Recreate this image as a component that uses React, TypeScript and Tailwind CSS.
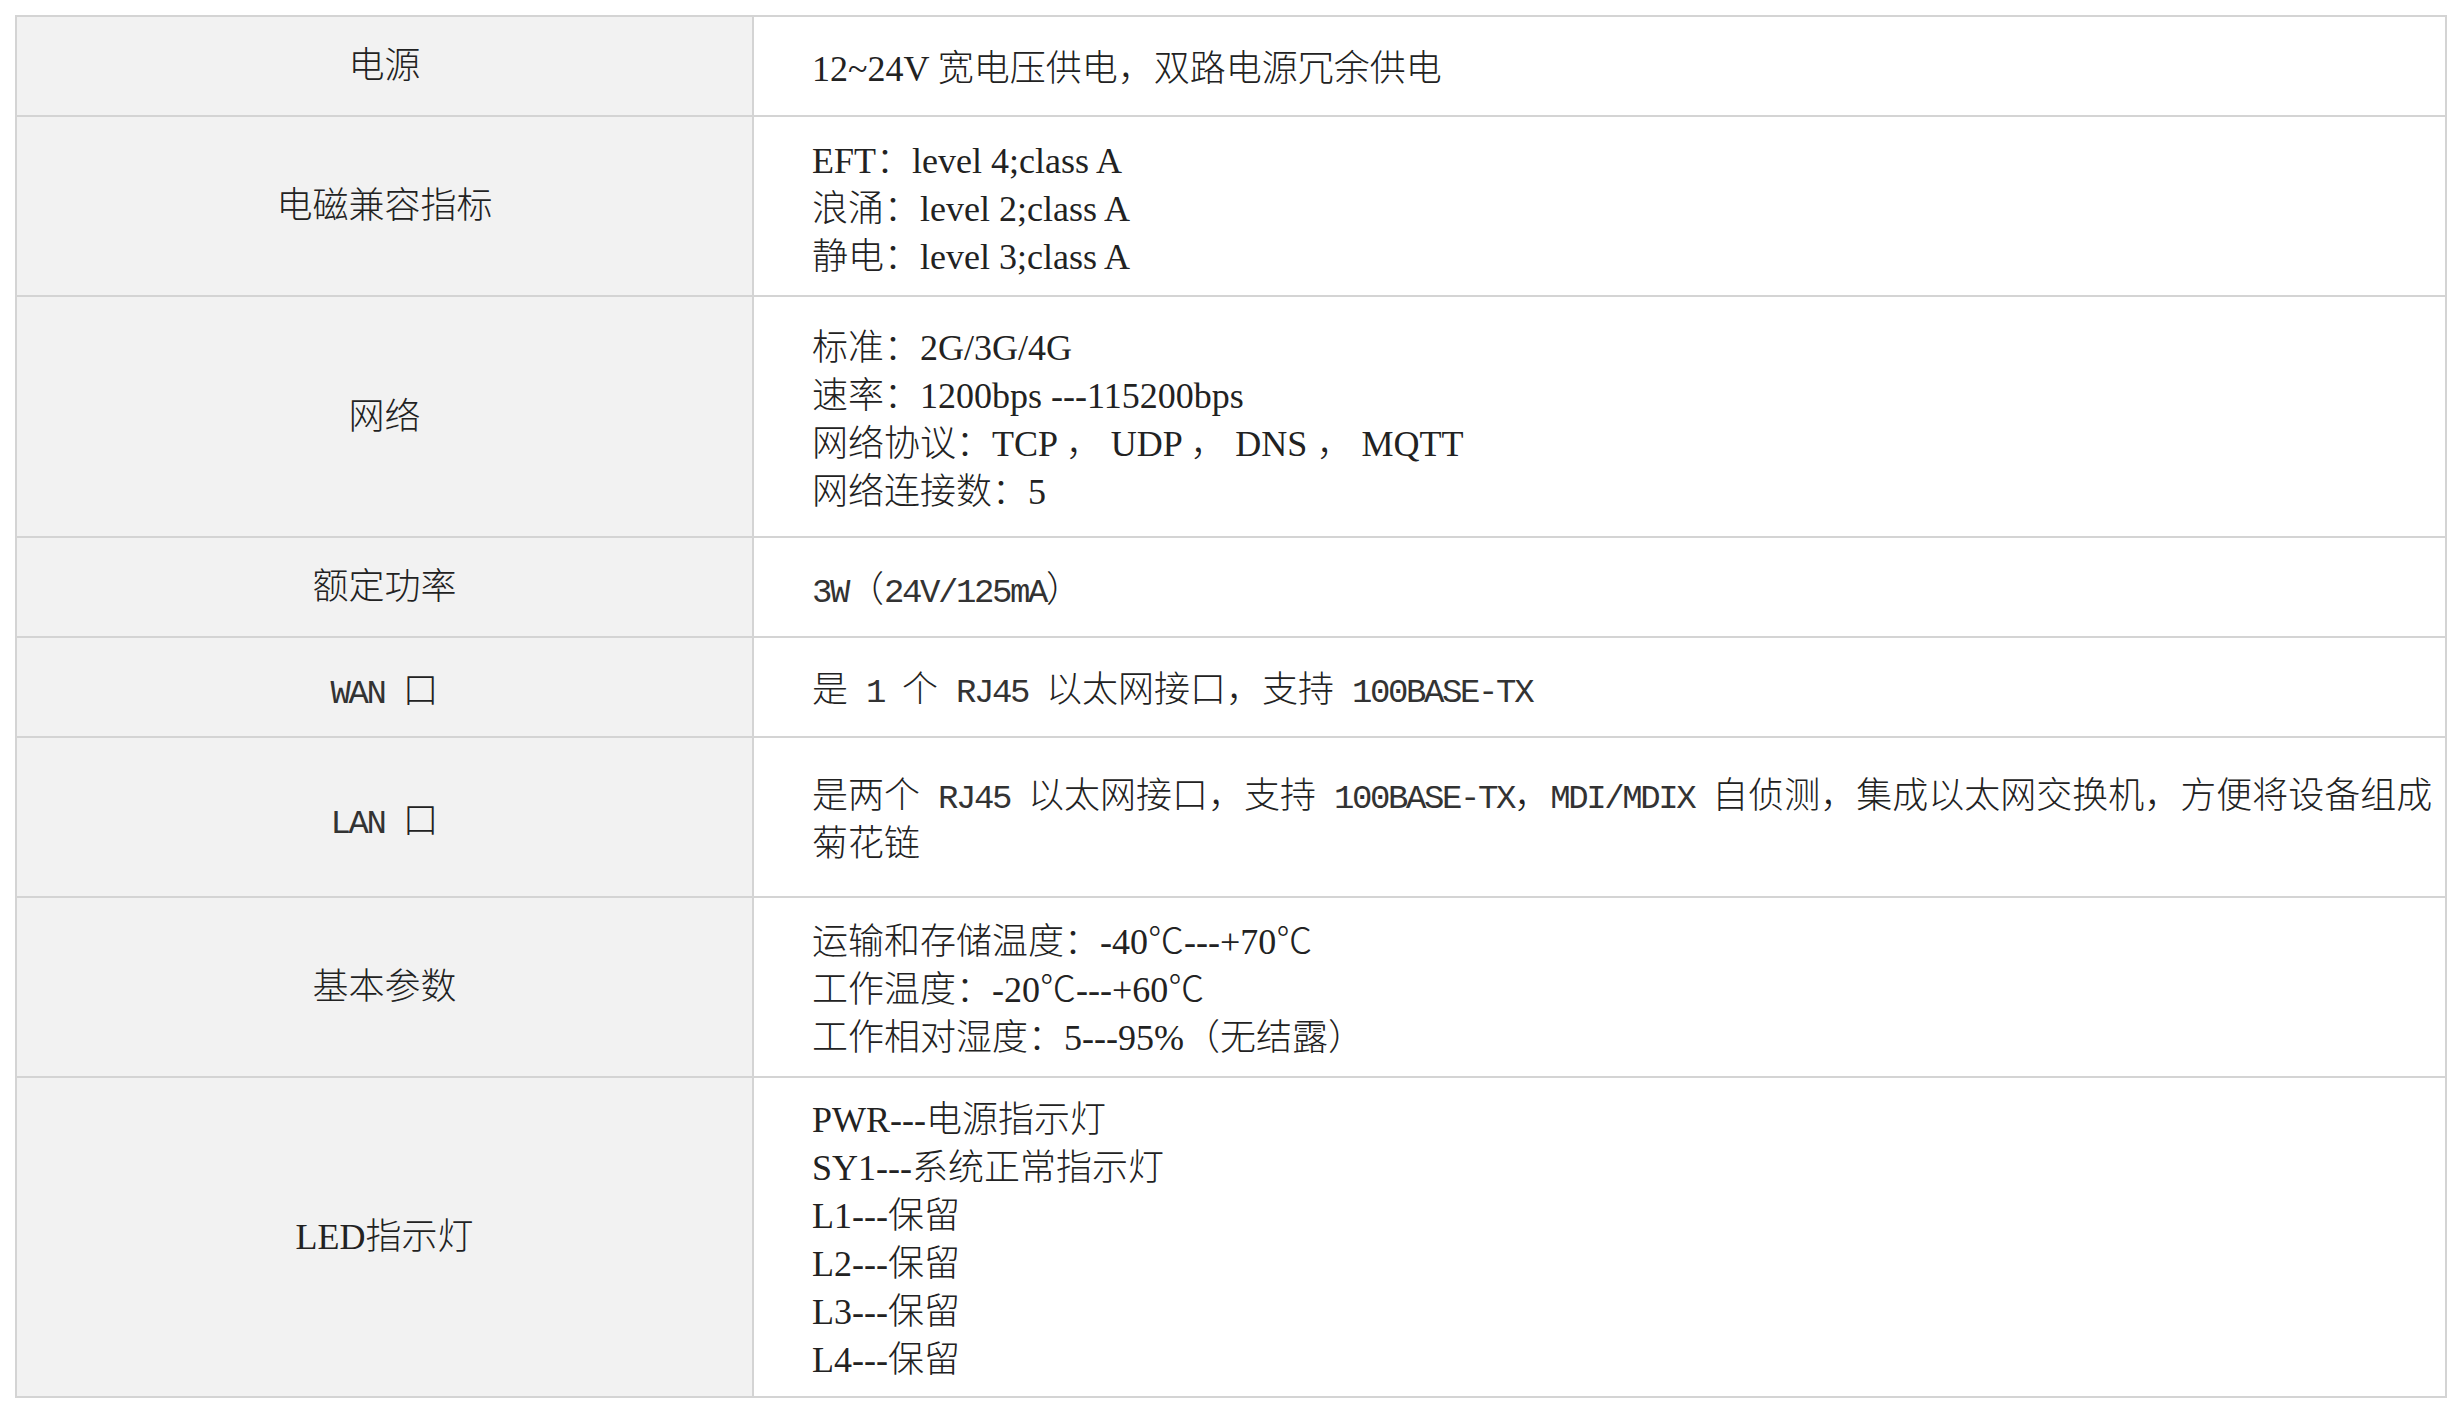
import React from "react";

type Kind = "serif" | "mono";

interface Row {
  label: string;
  labelKind: Kind;
  kind: Kind;
  lines: string[];
  h: string;
}

const rows: Row[] = [
  { label: "电源", labelKind: "serif", kind: "serif", h: "h-[100px]", lines: ["12~24V 宽电压供电，双路电源冗余供电"] },
  {
    label: "电磁兼容指标",
    labelKind: "serif",
    kind: "serif",
    h: "h-[180px]",
    lines: ["EFT：level 4;class A", "浪涌：level 2;class A", "静电：level 3;class A"],
  },
  {
    label: "网络",
    labelKind: "serif",
    kind: "serif",
    h: "h-[241px]",
    lines: ["标准：2G/3G/4G", "速率：1200bps ---115200bps", "网络协议：TCP ， UDP ， DNS ， MQTT", "网络连接数：5"],
  },
  { label: "额定功率", labelKind: "serif", kind: "mono", h: "h-[100px]", lines: ["3W（24V/125mA）"] },
  { label: "WAN 口", labelKind: "mono", kind: "mono", h: "h-[100px]", lines: ["是 1 个 RJ45 以太网接口，支持 100BASE-TX"] },
  {
    label: "LAN 口",
    labelKind: "mono",
    kind: "mono",
    h: "h-[160px]",
    lines: ["是两个 RJ45 以太网接口，支持 100BASE-TX，MDI/MDIX 自侦测，集成以太网交换机，方便将设备组成", "菊花链"],
  },
  {
    label: "基本参数",
    labelKind: "serif",
    kind: "serif",
    h: "h-[180px]",
    lines: ["运输和存储温度：-40℃---+70℃", "工作温度：-20℃---+60℃", "工作相对湿度：5---95%（无结露）"],
  },
  {
    label: "LED指示灯",
    labelKind: "serif",
    kind: "serif",
    h: "h-[320px]",
    lines: ["PWR---电源指示灯", "SY1---系统正常指示灯", "L1---保留", "L2---保留", "L3---保留", "L4---保留"],
  },
];

// mono rows: latin runs are half-width, CJK full-width
const MonoText: React.FC<{ text: string }> = ({ text }) => {
  const parts = text.split(/([\x20-\x7E]+)/).filter((p) => p !== "");
  return (
    <>
      {parts.map((p, i) =>
        /^[\x20-\x7E]+$/.test(p) ? (
          <span
            key={i}
            className="font-['Liberation_Mono',monospace] text-[34px] text-[#333] leading-none tracking-[-2.4px] whitespace-pre"
          >
            {p}
          </span>
        ) : (
          <span key={i} className="leading-none">
            {p}
          </span>
        )
      )}
    </>
  );
};

const Line: React.FC<{ text: string; kind: Kind }> = ({ text, kind }) =>
  kind === "mono" ? (
    <div className="h-[48px] font-['Noto_Sans_CJK_SC',sans-serif] font-light whitespace-nowrap">
      <MonoText text={text} />
    </div>
  ) : (
    <div className="font-['Liberation_Serif','Noto_Sans_CJK_SC',serif] font-light whitespace-nowrap">{text}</div>
  );

export default function App() {
  return (
    <div className="min-h-screen bg-white px-[15px] pt-[15px] text-[36px] leading-[48px] text-[#222]">
      <table className="w-[2432px] border-collapse border-2 border-[#d4d4d4]">
        <tbody>
          {rows.map((r) => (
            <tr key={r.label} className={r.h}>
              <td className="w-[737px] border-2 border-[#d4d4d4] bg-[#f2f2f2] text-center align-middle">
                <Line text={r.label} kind={r.labelKind} />
              </td>
              <td
                className={
                  r.kind === "mono"
                    ? "border-2 border-[#d4d4d4] bg-white pl-[58px] pb-[2px] align-middle"
                    : "border-2 border-[#d4d4d4] bg-white pl-[58px] pt-[6px] align-middle"
                }
              >
                {r.lines.map((l, i) => (
                  <Line key={i} text={l} kind={r.kind} />
                ))}
              </td>
            </tr>
          ))}
        </tbody>
      </table>
    </div>
  );
}
